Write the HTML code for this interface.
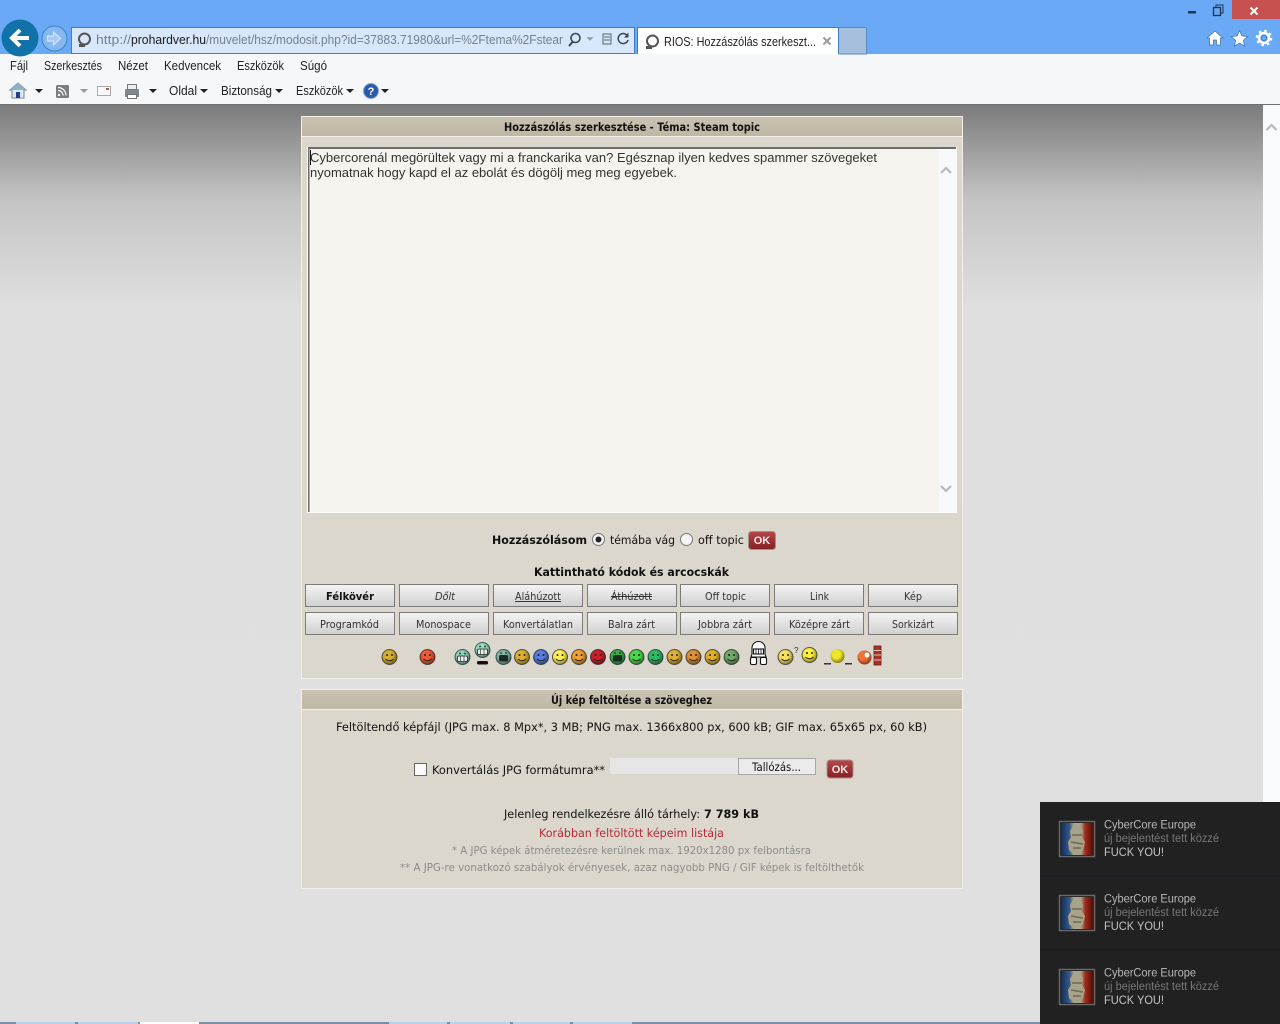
<!DOCTYPE html>
<html lang="hu"><head><meta charset="utf-8"><title>RIOS: Hozzászólás szerkesztése</title>
<style>
html,body{margin:0;padding:0;width:1280px;height:1024px;overflow:hidden;background:#e0e0e0}
svg{display:block}
text{white-space:pre}
.ui{font-family:"Liberation Sans",sans-serif;font-size:12.5px;fill:#222}
.p{font-family:"DejaVu Sans",sans-serif;font-size:11.5px;fill:#111}
.b{font-weight:bold}
.btn{font-family:"DejaVu Sans",sans-serif;font-size:11px;fill:#333}
.n{font-family:"Liberation Sans",sans-serif;font-size:11.5px}
</style></head><body>
<svg width="1280" height="1024" viewBox="0 0 1280 1024" xmlns="http://www.w3.org/2000/svg">
<defs>
<linearGradient id="pg" gradientUnits="userSpaceOnUse" x1="0" y1="105" x2="0" y2="1024">
<stop offset="0" stop-color="#7b7b7b"/><stop offset=".103" stop-color="#c4c4c4"/><stop offset=".22" stop-color="#dfdfdf"/><stop offset="1" stop-color="#e0e0e0"/></linearGradient>
<linearGradient id="hd" x1="0" y1="0" x2="0" y2="1"><stop offset="0" stop-color="#c9c3b2"/><stop offset="1" stop-color="#bfb7a4"/></linearGradient>
<linearGradient id="bt" x1="0" y1="0" x2="0" y2="1"><stop offset="0" stop-color="#f4f4f4"/><stop offset="1" stop-color="#d0d0d0"/></linearGradient>
<linearGradient id="ok" x1="0" y1="0" x2="0" y2="1"><stop offset="0" stop-color="#b5474a"/><stop offset="1" stop-color="#862024"/></linearGradient>
<linearGradient id="fl" x1="0" y1="0" x2="1" y2="0"><stop offset="0" stop-color="#0f2c5c"/><stop offset=".28" stop-color="#3a5c88"/><stop offset=".4" stop-color="#a8a690"/><stop offset=".62" stop-color="#a8a28a"/><stop offset=".76" stop-color="#a02a1a"/><stop offset="1" stop-color="#500e0a"/></linearGradient>
<radialGradient id="sh" cx=".42" cy=".38" r=".65"><stop offset=".45" stop-color="#000" stop-opacity="0"/><stop offset="1" stop-color="#000" stop-opacity=".5"/></radialGradient>
<g id="av"><rect x="0.500" y="0.500" width="35" height="35" fill="#171717" stroke="#6a6a6a" stroke-width="1.500"/><rect x="2" y="2" width="32" height="32" fill="url(#fl)"/><path d="M14 5h8l2 5-1 6 3 5-2 8-4 4h-6l-4-4-1-8 3-5-1-6z" fill="#a8a288"/><path d="M13 14h10M12 21l12 2M14 27h8" stroke="#6f6a55" stroke-width="1.500"/></g>
<g id="chev"><path d="M-5 3L0 -2L5 3" fill="none" stroke="#b9b9b9" stroke-width="2.200"/></g>
<g id="f"><circle r="7.500" fill="currentColor"/><circle r="7.500" fill="url(#sh)" stroke="#222" stroke-width="1" stroke-opacity=".7"/><circle cx="-2.500" cy="-2" r="1" fill="#222"/><circle cx="2.500" cy="-2" r="1" fill="#222"/><path d="M-4 2Q0 5.500 4 2" fill="none" stroke="#222" stroke-width="1"/></g>
<g id="g"><circle r="7.500" fill="currentColor"/><circle r="7.500" fill="url(#sh)" stroke="#123" stroke-width="1" stroke-opacity=".7"/><rect x="-5" y="-1" width="10" height="5.500" rx="1.500" fill="#e8f0ec" stroke="#222" stroke-width=".8"/><path d="M-2 -1v5M1.500 -1v5" stroke="#333" stroke-width=".7"/><circle cx="-2.500" cy="-3.500" r=".9" fill="#222"/><circle cx="2.500" cy="-3.500" r=".9" fill="#222"/></g>
<g id="o"><circle r="7.500" fill="currentColor"/><circle r="7.500" fill="url(#sh)" stroke="#123" stroke-width="1" stroke-opacity=".7"/><rect x="-4.500" y="-2" width="9" height="6.500" rx="1.500" fill="#1d2a22"/><circle cx="-2.500" cy="-4" r=".9" fill="#222"/><circle cx="2.500" cy="-4" r=".9" fill="#222"/></g>
<path id="tri" d="M-4 -2h8l-4 4z" fill="#222"/>
<path id="trig" d="M-4 -2h8l-4 4z" fill="#999"/>
</defs>

<!-- page -->
<rect y="105" width="1280" height="919" fill="url(#pg)"/>
<!-- browser chrome -->
<rect width="1280" height="54" fill="#69a9f5"/>
<rect y="54" width="1280" height="51" fill="#f6f7f9"/>
<rect y="104" width="1280" height="1" fill="#6f6f6f"/>
<rect x="1232" width="48" height="19" fill="#c75050"/>
<path d="M1250.500 7.500l7 7M1257.500 7.500l-7 7" stroke="#fff" stroke-width="2"/>
<rect x="1188" y="11" width="8" height="2.500" fill="#1f3650"/>
<rect x="1213.500" y="7.500" width="7" height="8" fill="none" stroke="#1f3650" stroke-width="1.300"/>
<path d="M1216 7V5h7v8h-2.500" fill="none" stroke="#1f3650"/>

<!-- back / forward -->
<circle cx="20" cy="38" r="18.500" fill="#0f72a8"/>
<path d="M29 38H12M20 30l-8 8 8 8" fill="none" stroke="#fff" stroke-width="4"/>
<circle cx="54.500" cy="38.500" r="12.500" fill="#86b8f0" stroke="#3c83c6"/>
<path d="M47.500 36h6v-4l7 6.500-7 6.500v-4h-6z" fill="#a4caf4" stroke="#d4e5fa" stroke-width="1.200"/>
<!-- address bar -->
<rect x="71.500" y="27.500" width="563" height="26" fill="#d8e7fb" stroke="#3f7fbf"/>
<circle cx="84.500" cy="39" r="5.500" fill="none" stroke="#555" stroke-width="2"/><rect x="79" y="44" width="6" height="3" fill="#555"/>
<text class="ui" x="96" y="44" style="fill:#72808f" textLength="35" lengthAdjust="spacingAndGlyphs">http://</text>
<text class="ui" x="131" y="44" style="fill:#1a1a1a" textLength="75" lengthAdjust="spacingAndGlyphs">prohardver.hu</text>
<text class="ui" x="206" y="44" style="fill:#72808f" textLength="357" lengthAdjust="spacingAndGlyphs">/muvelet/hsz/modosit.php?id=37883.71980&amp;url=%2Ftema%2Fstear</text>
<circle cx="575.500" cy="38" r="4.500" fill="none" stroke="#3a4654" stroke-width="1.600"/><path d="M572.500 42l-3.500 4" stroke="#3a4654" stroke-width="2"/>
<use href="#trig" x="590" y="39" transform="translate(59 3.900) scale(.9)"/>
<rect x="603" y="34" width="8" height="10" fill="none" stroke="#59636e"/><path d="M604 37h6M604 40h6" stroke="#59636e"/>
<path d="M627.500 36a5 5 0 1 0 .5 4" fill="none" stroke="#3a4654" stroke-width="1.500"/><path d="M628.500 32.500v5h-4.500z" fill="#3a4654"/>
<!-- tabs -->
<rect x="838" y="27.500" width="28.500" height="26.500" fill="#a6bfde" stroke="#5a8cc0"/>
<rect x="637.500" y="27.500" width="201" height="28" fill="#fff" stroke="#3f7fbf"/>
<rect x="637" y="54" width="202" height="2" fill="#f6f7f9"/>
<circle cx="652.500" cy="41" r="5.500" fill="none" stroke="#555" stroke-width="2"/><rect x="646" y="46" width="6" height="3" fill="#555"/>
<text class="ui" x="664" y="46" textLength="152" lengthAdjust="spacingAndGlyphs">RIOS: Hozzászólás szerkeszt...</text>
<path d="M823.500 37.500l7 7M830.500 37.500l-7 7" stroke="#9a9a9a" stroke-width="2"/>
<!-- right icons -->
<path d="M1215 31l-8 7h2.500v7h4v-5h3v5h4v-7h2.500z" fill="#fff" stroke="#3a6ea8" stroke-width=".7"/>
<path d="M1239.500 30.500l2.400 5.400 5.800.6-4.400 3.900 1.300 5.700-5.100-3-5.100 3 1.300-5.700-4.400-3.900 5.800-.6z" fill="#fff" stroke="#3a6ea8" stroke-width=".7"/>
<circle cx="1264" cy="38" r="5" fill="none" stroke="#fff" stroke-width="2.500"/><circle cx="1264" cy="38" r="7" fill="none" stroke="#fff" stroke-width="2.500" stroke-dasharray="2.500 3"/><circle cx="1264" cy="38" r="2.500" fill="none" stroke="#3a6ea8" stroke-width=".7"/>
<!-- menu -->
<g class="ui">
<text x="10" y="70" textLength="18" lengthAdjust="spacingAndGlyphs">Fájl</text>
<text x="44" y="70" textLength="58" lengthAdjust="spacingAndGlyphs">Szerkesztés</text>
<text x="118" y="70" textLength="30" lengthAdjust="spacingAndGlyphs">Nézet</text>
<text x="164" y="70" textLength="57" lengthAdjust="spacingAndGlyphs">Kedvencek</text>
<text x="237" y="70" textLength="47" lengthAdjust="spacingAndGlyphs">Eszközök</text>
<text x="300" y="70" textLength="27" lengthAdjust="spacingAndGlyphs">Súgó</text>
<text x="169" y="95" textLength="28" lengthAdjust="spacingAndGlyphs">Oldal</text>
<text x="221" y="95" textLength="51" lengthAdjust="spacingAndGlyphs">Biztonság</text>
<text x="296" y="95" textLength="47" lengthAdjust="spacingAndGlyphs">Eszközök</text>
</g>
<use href="#tri" x="39" y="91"/><use href="#trig" x="84" y="91"/><use href="#tri" x="153" y="91"/>
<use href="#tri" x="204" y="91"/><use href="#tri" x="279" y="91"/><use href="#tri" x="350" y="91"/><use href="#tri" x="385" y="91"/>
<!-- toolbar icons -->
<path d="M18 83l-8 7h2v8h12v-8h2z" fill="#dfe8ee" stroke="#6f8796"/><path d="M18 83l-8 7h16z" fill="#8fb2c4"/><rect x="16" y="92" width="4" height="6" fill="#1d3f8a"/>
<rect x="56" y="85" width="13" height="13" rx="1.500" fill="#7d7d7d"/><circle cx="59" cy="95" r="1.200" fill="#fff"/><path d="M58 90.500a5 5 0 0 1 5 5M58 87.500a8 8 0 0 1 8 8" fill="none" stroke="#fff" stroke-width="1.200"/>
<rect x="97.500" y="86.500" width="13" height="9" fill="#fafafa" stroke="#aaa"/><rect x="106" y="88" width="3" height="2" fill="#c75050"/>
<rect x="125" y="89" width="14" height="8" rx="1" fill="#7c8a90"/><rect x="127.500" y="84.500" width="9" height="5" fill="#eee" stroke="#777"/><rect x="127.500" y="94.500" width="9" height="4" fill="#fff" stroke="#777"/>
<circle cx="371" cy="91" r="7.500" fill="#2a5cab" stroke="#8aa6d4"/><text x="371" y="95" text-anchor="middle" font-family="Liberation Sans, sans-serif" font-weight="bold" font-size="11" fill="#fff">?</text>
<!-- page scrollbar -->
<rect x="1263" y="105" width="17" height="919" fill="#f9fafb"/>
<use href="#chev" x="1271.500" y="127"/>

<!-- panel 1 -->
<rect x="301.500" y="116.500" width="661" height="562" fill="#dcd7cc" stroke="#f2f0ea"/>
<rect x="302" y="117" width="660" height="19" fill="url(#hd)"/>
<rect x="302" y="136" width="660" height="1" fill="#f2f0ea"/>
<text class="p b" x="504" y="131" textLength="256" lengthAdjust="spacingAndGlyphs">Hozzászólás szerkesztése - Téma: Steam topic</text>
<!-- textarea -->
<rect x="307" y="147" width="650" height="366" fill="#fdfdfc"/>
<rect x="309" y="149" width="630" height="363" fill="#f5f4ef"/>
<rect x="939" y="149" width="17" height="363" fill="#f8f9fa"/>
<rect x="308" y="147" width="648" height="2" fill="#6d6d6d"/>
<rect x="308" y="147" width="1.500" height="365" fill="#6d6d6d"/>
<rect x="310" y="150" width="1" height="15" fill="#111"/>
<text x="310" y="162" font-family="Liberation Sans,sans-serif" font-size="13.330" fill="#333" textLength="567" lengthAdjust="spacingAndGlyphs">Cybercorenál megörültek vagy mi a franckarika van? Egésznap ilyen kedves spammer szövegeket</text>
<text x="310" y="177" font-family="Liberation Sans,sans-serif" font-size="13.330" fill="#333" textLength="367" lengthAdjust="spacingAndGlyphs">nyomatnak hogy kapd el az ebolát és dögölj meg meg egyebek.</text>
<use href="#chev" x="946" y="170"/>
<use href="#chev" transform="translate(946 489) scale(1 -1)"/>
<!-- radio row -->
<text class="p b" x="492" y="544" textLength="95" lengthAdjust="spacingAndGlyphs">Hozzászólásom</text>
<circle cx="598.500" cy="539.500" r="6" fill="#f4f4f4" stroke="#777"/><circle cx="598.500" cy="539.500" r="3" fill="#222"/>
<text class="p" x="610" y="544" textLength="65" lengthAdjust="spacingAndGlyphs">témába vág</text>
<circle cx="686.500" cy="539.500" r="6" fill="#f4f4f4" stroke="#777"/>
<text class="p" x="698" y="544" textLength="46" lengthAdjust="spacingAndGlyphs">off topic</text>
<rect x="748.500" y="531.500" width="27" height="18" rx="3" fill="url(#ok)" stroke="#a98f88"/>
<text x="762" y="544" text-anchor="middle" font-family="Liberation Sans,sans-serif" font-weight="bold" font-size="11" fill="#f8e8e8">OK</text>
<text class="p b" x="534" y="576" textLength="195" lengthAdjust="spacingAndGlyphs">Kattintható kódok és arcocskák</text>
<!-- buttons -->
<g fill="url(#bt)" stroke="#7b7b78">
<rect x="305.500" y="584.500" width="89" height="22"/><rect x="399.500" y="584.500" width="89" height="22"/><rect x="493.500" y="584.500" width="89" height="22"/><rect x="587.500" y="584.500" width="89" height="22"/><rect x="680.500" y="584.500" width="89" height="22"/><rect x="774.500" y="584.500" width="89" height="22"/><rect x="868.500" y="584.500" width="89" height="22"/>
<rect x="305.500" y="612.500" width="89" height="22"/><rect x="399.500" y="612.500" width="89" height="22"/><rect x="493.500" y="612.500" width="89" height="22"/><rect x="587.500" y="612.500" width="89" height="22"/><rect x="680.500" y="612.500" width="89" height="22"/><rect x="774.500" y="612.500" width="89" height="22"/><rect x="868.500" y="612.500" width="89" height="22"/>
</g>
<g class="btn">
<text x="326" y="600" textLength="48" lengthAdjust="spacingAndGlyphs" font-weight="bold" style="fill:#111">Félkövér</text>
<text x="435" y="600" textLength="20" lengthAdjust="spacingAndGlyphs" font-style="italic">Dőlt</text>
<text x="515" y="600" textLength="46" lengthAdjust="spacingAndGlyphs">Aláhúzott</text>
<text x="611" y="600" textLength="41" lengthAdjust="spacingAndGlyphs">Áthúzott</text>
<text x="705" y="600" textLength="41" lengthAdjust="spacingAndGlyphs">Off topic</text>
<text x="810" y="600" textLength="19" lengthAdjust="spacingAndGlyphs">Link</text>
<text x="904" y="600" textLength="18" lengthAdjust="spacingAndGlyphs">Kép</text>
<text x="320" y="628" textLength="59" lengthAdjust="spacingAndGlyphs">Programkód</text>
<text x="416" y="628" textLength="55" lengthAdjust="spacingAndGlyphs">Monospace</text>
<text x="503" y="628" textLength="70" lengthAdjust="spacingAndGlyphs">Konvertálatlan</text>
<text x="608" y="628" textLength="47" lengthAdjust="spacingAndGlyphs">Balra zárt</text>
<text x="698" y="628" textLength="54" lengthAdjust="spacingAndGlyphs">Jobbra zárt</text>
<text x="789" y="628" textLength="61" lengthAdjust="spacingAndGlyphs">Középre zárt</text>
<text x="892" y="628" textLength="42" lengthAdjust="spacingAndGlyphs">Sorkizárt</text>
</g>
<rect x="515" y="601" width="46" height="1" fill="#333"/>
<rect x="611" y="596" width="41" height="1" fill="#333"/>
<!-- smileys -->
<use href="#f" x="389.500" y="657" color="#d4b030"/>
<use href="#f" x="427.500" y="657" color="#ee5a32"/>
<use href="#g" x="462.500" y="657" color="#8fd0b4"/>
<use href="#g" x="482.500" y="650" color="#95dcbc"/><rect x="477" y="661" width="11" height="3.500" rx="1.500" fill="#111"/>
<use href="#o" x="503.500" y="657" color="#84b8a8"/>
<use href="#f" x="522" y="657" color="#dcb030"/>
<use href="#f" x="541" y="657" color="#567ce0"/>
<use href="#f" x="560" y="657" color="#fff050"/>
<use href="#f" x="579" y="657" color="#f0a030"/>
<use href="#f" x="598" y="657" color="#cc2028"/>
<use href="#o" x="617.500" y="657" color="#38b048"/>
<use href="#f" x="636.500" y="657" color="#48d848"/>
<use href="#f" x="655.500" y="657" color="#28bc68"/>
<use href="#f" x="674.500" y="657" color="#e0b034"/>
<use href="#f" x="693.500" y="657" color="#dc9030"/>
<use href="#f" x="712.500" y="657" color="#e0b028"/>
<use href="#f" x="731.500" y="657" color="#70a868"/>
<g fill="#fff" stroke="#111" stroke-width="1.100"><path d="M752 654v-6a6.500 6.500 0 0 1 13 0v6l1 3h-15z"/><rect x="753.500" y="649" width="10" height="5"/><path d="M756 649v5M758.500 649v5M761 649v5" fill="none" stroke-width=".8"/><rect x="750.500" y="657.500" width="6" height="7" rx="1.500"/><rect x="760.500" y="657.500" width="6" height="7" rx="1.500"/></g>
<use href="#f" x="785.500" y="657" color="#f8e060"/><text x="794" y="653" font-family="Liberation Sans,sans-serif" font-size="8" fill="#333">?</text>
<use href="#f" x="809.500" y="655" color="#fff040"/>
<circle cx="837.500" cy="656" r="7" fill="#f0e628"/><circle cx="837.500" cy="656" r="7" fill="url(#sh)"/><rect x="824" y="663" width="7" height="1.500" fill="#333"/><rect x="845" y="663" width="7" height="1.500" fill="#333"/>
<circle cx="864.500" cy="657.500" r="7" fill="#f07238"/><circle cx="864.500" cy="657.500" r="7" fill="url(#sh)"/><circle cx="867" cy="655" r="2.500" fill="#fff"/>
<rect x="874" y="646" width="7" height="19" fill="#a8322a" stroke="#6a1a14" stroke-width=".8"/><path d="M874 650.500h7M874 655h7M874 660h7" stroke="#d8cdb8"/>

<!-- panel 2 -->
<rect x="301.500" y="689.500" width="661" height="199" fill="#dcd7cc" stroke="#f2f0ea"/>
<rect x="302" y="690" width="660" height="19" fill="url(#hd)"/>
<rect x="302" y="709" width="660" height="1" fill="#f2f0ea"/>
<text class="p b" x="551" y="704" textLength="161" lengthAdjust="spacingAndGlyphs">Új kép feltöltése a szöveghez</text>
<text class="p" x="336" y="731" textLength="591" lengthAdjust="spacingAndGlyphs">Feltöltendő képfájl (JPG max. 8 Mpx*, 3 MB; PNG max. 1366x800 px, 600 kB; GIF max. 65x65 px, 60 kB)</text>
<rect x="414.500" y="763.500" width="12" height="12" fill="#fafafa" stroke="#666"/>
<text class="p" x="432" y="774" textLength="173" lengthAdjust="spacingAndGlyphs">Konvertálás JPG formátumra**</text>
<rect x="610" y="758" width="128" height="16" fill="#e6e6e6"/>
<rect x="738.500" y="758.500" width="77" height="16" fill="#ebebeb" stroke="#a8a8a8"/>
<text class="p" x="752" y="771" textLength="49" lengthAdjust="spacingAndGlyphs">Tallózás...</text>
<rect x="827" y="760" width="26" height="18" rx="3" fill="url(#ok)" stroke="#a98f88"/>
<text x="840" y="773" text-anchor="middle" font-family="Liberation Sans,sans-serif" font-weight="bold" font-size="11" fill="#f8e8e8">OK</text>
<text class="p" x="504" y="818" textLength="196" lengthAdjust="spacingAndGlyphs">Jelenleg rendelkezésre álló tárhely:</text>
<text class="p b" x="704" y="818" textLength="55" lengthAdjust="spacingAndGlyphs">7 789 kB</text>
<text class="p" x="539" y="837" textLength="185" lengthAdjust="spacingAndGlyphs" style="fill:#b52a38">Korábban feltöltött képeim listája</text>
<text class="p" x="452" y="854" textLength="359" lengthAdjust="spacingAndGlyphs" style="fill:#8c8c8c;font-size:10.500px">* A JPG képek átméretezésre kerülnek max. 1920x1280 px felbontásra</text>
<text class="p" x="400" y="871" textLength="464" lengthAdjust="spacingAndGlyphs" style="fill:#8c8c8c;font-size:10.500px">** A JPG-re vonatkozó szabályok érvényesek, azaz nagyobb PNG / GIF képek is feltölthetők</text>

<!-- bottom strip -->
<rect y="1022" width="1040" height="2" fill="#7a8ca6"/>
<rect x="16" y="1022" width="59" height="2" fill="#bcd0e8"/><rect x="78" y="1022" width="60" height="2" fill="#bcd0e8"/><rect x="140" y="1022" width="59" height="2" fill="#fff"/>
<rect x="389" y="1022" width="58" height="2" fill="#bcd0e8"/><rect x="450" y="1022" width="60" height="2" fill="#bcd0e8"/><rect x="513" y="1022" width="57" height="2" fill="#bcd0e8"/><rect x="573" y="1022" width="59" height="2" fill="#bcd0e8"/>

<!-- notifications -->
<rect x="1040" y="802" width="240" height="222" fill="#212121"/>
<rect x="1040" y="875" width="240" height="2" fill="#1b2026"/>
<rect x="1040" y="949" width="240" height="2" fill="#1a1d21"/>
<use href="#av" x="1059" y="821"/><use href="#av" x="1059" y="895"/><use href="#av" x="1059" y="969"/>
<g class="n">
<text x="1104" y="828.500" fill="#b8b8b8" textLength="92" lengthAdjust="spacingAndGlyphs">CyberCore Europe</text>
<text x="1104" y="842" fill="#777" textLength="115" lengthAdjust="spacingAndGlyphs">új bejelentést tett közzé</text>
<text x="1104" y="856" fill="#c4c4c4" textLength="60" lengthAdjust="spacingAndGlyphs">FUCK YOU!</text>
<text x="1104" y="902.500" fill="#b8b8b8" textLength="92" lengthAdjust="spacingAndGlyphs">CyberCore Europe</text>
<text x="1104" y="916" fill="#777" textLength="115" lengthAdjust="spacingAndGlyphs">új bejelentést tett közzé</text>
<text x="1104" y="930" fill="#c4c4c4" textLength="60" lengthAdjust="spacingAndGlyphs">FUCK YOU!</text>
<text x="1104" y="976.500" fill="#b8b8b8" textLength="92" lengthAdjust="spacingAndGlyphs">CyberCore Europe</text>
<text x="1104" y="990" fill="#777" textLength="115" lengthAdjust="spacingAndGlyphs">új bejelentést tett közzé</text>
<text x="1104" y="1004" fill="#c4c4c4" textLength="60" lengthAdjust="spacingAndGlyphs">FUCK YOU!</text>
</g>
</svg>
</body></html>
